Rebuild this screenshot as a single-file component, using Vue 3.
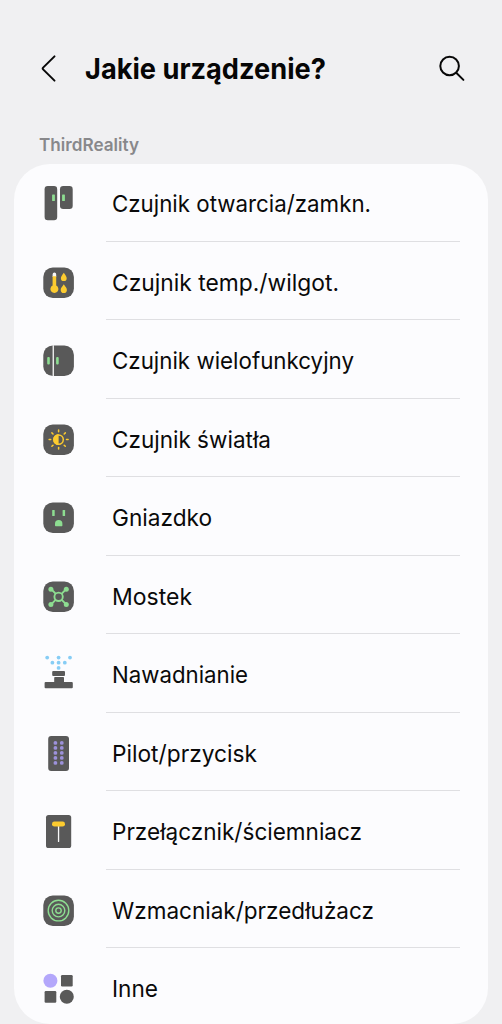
<script setup>
const rows = [
  { id: 'contact', label: 'Czujnik otwarcia/zamkn.', width: 259 },
  { id: 'climate', label: 'Czujnik temp./wilgot.', width: 227 },
  { id: 'multi', label: 'Czujnik wielofunkcyjny', width: 242 },
  { id: 'light', label: 'Czujnik światła', width: 159 },
  { id: 'outlet', label: 'Gniazdko', width: 100 },
  { id: 'bridge', label: 'Mostek', width: 80 },
  { id: 'water', label: 'Nawadnianie', width: 136 },
  { id: 'remote', label: 'Pilot/przycisk', width: 145 },
  { id: 'switch', label: 'Przełącznik/ściemniacz', width: 250 },
  { id: 'repeater', label: 'Wzmacniak/przedłużacz', width: 262 },
  { id: 'other', label: 'Inne', width: 46 },
]
const tiled = ['climate', 'multi', 'light', 'outlet', 'bridge', 'repeater']
const rays = [0, 45, 90, 135, 180, 225, 270, 315]
</script>

<template>
  <main class="screen">
    <header class="bar">
      <svg class="back" viewBox="0 0 24 32" aria-label="Wstecz">
        <path d="M18.5 3.4 7.1 14.6q-.9.9 0 1.8L18.5 27.6" />
      </svg>
      <h1>
        <svg class="title" width="242" height="46"><text x="0" y="33" textLength="241" lengthAdjust="spacingAndGlyphs">Jakie urządzenie?</text></svg>
      </h1>
      <svg class="search" viewBox="0 0 32 32" aria-label="Szukaj">
        <circle cx="13.6" cy="13" r="9.3" />
        <path d="m20.2 19.8 7.2 7.1" />
      </svg>
    </header>
    <h2>
      <svg class="group" width="102" height="24"><text x="0" y="18.5" textLength="100" lengthAdjust="spacingAndGlyphs">ThirdReality</text></svg>
    </h2>
    <ul class="card">
      <li v-for="row in rows" :key="row.id" class="row">
        <svg class="icon" viewBox="0 0 50 52">
          <rect v-if="tiled.includes(row.id)" x="9.3" y="10.4" width="30.6" height="30.6" rx="9.5" class="dark" />
          <g v-if="row.id === 'contact'">
            <rect class="dark" x="10.6" y="8" width="12.6" height="34.2" rx="3.2" />
            <rect class="dark" x="26" y="8" width="12.7" height="23" rx="3.2" />
            <rect class="green" x="18.1" y="16.5" width="2.8" height="6.5" rx=".6" />
            <rect class="green" x="28.1" y="16.5" width="2.8" height="6.5" rx=".6" />
          </g>
          <g v-else-if="row.id === 'climate'">
            <path class="white" d="M18.6 20v-2.6a1.8 1.8 0 0 1 3.6 0V20Z" />
            <path class="yellow" d="M18.6 19.2h3.6v9.3a4 4 0 1 1-3.6 0Z" />
            <path class="yellow" d="M29.8 15.8c1.5 2.3 2.9 3.7 2.9 5.4a2.9 2.9 0 0 1-5.8 0c0-1.7 1.4-3.1 2.9-5.4Z" />
            <path class="yellow" d="M29.8 27.3c1.6 2.4 3.1 3.8 3.1 5.7a3.1 3.1 0 0 1-6.2 0c0-1.9 1.5-3.3 3.1-5.7Z" />
          </g>
          <g v-else-if="row.id === 'multi'">
            <rect class="white" x="18.6" y="10.2" width="1.3" height="31.2" />
            <rect class="green" x="13.2" y="22" width="2.6" height="7.6" rx="1" />
            <rect class="green" x="22.1" y="22" width="2.6" height="7.6" rx="1" />
          </g>
          <g v-else-if="row.id === 'light'">
            <circle class="sun" cx="24.6" cy="25.6" r="4.7" />
            <path class="yellow" d="M24.6 20.1a5.5 5.5 0 0 0 0 11Z" />
            <path v-for="a in rays" :key="a" class="ray" d="M24.6 17.7v-1.6" :transform="`rotate(${a} 24.6 25.6)`" />
          </g>
          <g v-else-if="row.id === 'outlet'">
            <rect class="green" x="18.2" y="18" width="2.5" height="6" rx=".5" />
            <rect class="green" x="28.6" y="18" width="2.5" height="6" rx=".5" />
            <path class="green" d="M21 33.5v-1.8a3.7 3.7 0 0 1 7.4 0v1.8q0 .7-.7.7h-6q-.7 0-.7-.7Z" />
          </g>
          <g v-else-if="row.id === 'bridge'">
            <path class="link" d="m17.2 18.2 4.4 4.5m6.2 6.2 4.3 4.4m0-15.1-4.3 4.5m-6.2 6.2-4.4 4.4" />
            <circle class="link" cx="24.6" cy="25.8" r="4.2" />
            <circle class="green" cx="16.9" cy="18.2" r="2.5" />
            <circle class="green" cx="32.3" cy="18.2" r="2.5" />
            <circle class="green" cx="16.9" cy="33.4" r="2.5" />
            <circle class="green" cx="32.3" cy="33.4" r="2.5" />
          </g>
          <g v-else-if="row.id === 'water'">
            <g class="blue">
              <circle cx="13.2" cy="8.6" r="1.9" /><circle cx="24.6" cy="8.6" r="1.9" /><circle cx="36" cy="8.6" r="1.9" />
              <circle cx="18.4" cy="13.7" r="1.9" /><circle cx="24.6" cy="13.7" r="1.9" /><circle cx="30.8" cy="13.7" r="1.9" />
              <circle cx="24.6" cy="18.9" r="1.9" />
            </g>
            <rect class="dark" x="18.2" y="22" width="12.8" height="5" rx="1" />
            <path class="dark" d="M21 28h8.2q.8 0 .8.8V33h7.8q1 0 1 1v4.2q0 1-1 1H11.6q-1 0-1-1V34q0-1 1-1h8.6v-4.2q0-.8.8-.8Z" />
          </g>
          <g v-else-if="row.id === 'remote'">
            <rect class="dark" x="14.2" y="8" width="20.8" height="35" rx="3" />
            <template v-for="n in 5" :key="n">
              <circle class="violet" cx="21.4" :cy="9.9 + n * 5" r="1.9" />
              <circle class="violet" cx="27.8" :cy="9.9 + n * 5" r="1.9" />
            </template>
          </g>
          <g v-else-if="row.id === 'switch'">
            <rect class="dark" x="12" y="9" width="25.2" height="33" rx="2.6" />
            <rect class="white" x="23.9" y="20" width="1.3" height="16" rx=".6" />
            <rect class="yellow" x="18" y="15.6" width="13" height="5" rx="2.4" />
          </g>
          <g v-else-if="row.id === 'repeater'">
            <circle class="ring" cx="24.5" cy="25.6" r="10.3" />
            <circle class="ring" cx="24.5" cy="25.6" r="6.3" />
            <circle class="ring" cx="24.5" cy="25.6" r="2.7" />
          </g>
          <g v-else>
            <circle class="lilac" cx="16.4" cy="17.8" r="7" />
            <rect class="dark" x="27" y="12" width="11.7" height="11.5" rx="1.2" />
            <rect class="dark" x="10.6" y="28" width="11.7" height="11.8" rx="1.2" />
            <circle class="dark" cx="32.8" cy="33.8" r="7" />
          </g>
        </svg>
        <div class="cell">
          <svg class="label" height="40" width="340">
            <text x="0" y="28" :textLength="row.width" lengthAdjust="spacingAndGlyphs">{{ row.label }}</text>
          </svg>
        </div>
      </li>
    </ul>
  </main>
</template>

<style scoped>
.screen { box-sizing: border-box; width: 502px; height: 1024px; background: #f0f0f2; overflow: hidden; padding: 46px 14px 0; font-family: Inter, "Open Sans", sans-serif; color: #060606; }
.bar { display: flex; align-items: center; height: 46px; padding-left: 22px; }
.back { width: 24px; height: 32px; flex: none; }
.search { width: 32px; height: 32px; margin-left: auto; margin-right: 20px; }
.back, .search { fill: none; stroke: #080808; stroke-width: 2; stroke-linecap: round; }
h1 { margin: 0 0 0 25px; height: 46px; font-size: 28.5px; font-weight: 700; }
h2 { margin: 40px 0 0 25px; height: 31.5px; font-size: 17.5px; font-weight: 600; }
.title, .group { display: block; overflow: visible; }
.title { fill: #060606; }
.group { fill: #88888b; }
.card { box-sizing: border-box; list-style: none; margin: 0; padding: 0; height: 860.5px; border-radius: 36px; background: #fcfcfe; overflow: hidden; }
.row { display: flex; height: 78.55px; padding: 0 28px 0 20px; }
.icon { width: 50px; height: 52px; flex: none; margin-top: 14.5px; }
.cell { box-sizing: border-box; flex: 1; height: 78px; margin-left: 22px; padding: 20.5px 0 0 6px; border-bottom: 1px solid #dfdfe2; }
.row:last-child .cell { border-color: transparent; }
.label { display: block; overflow: visible; }
.label text { font-size: 23.5px; fill: #0a0a0a; }
.dark { fill: #595959; }
.green { fill: #8ddd91; }
.yellow { fill: #fccb2f; }
.white { fill: #f8f8f8; }
.blue { fill: #86cdf5; }
.violet { fill: #9c91da; }
.lilac { fill: #b3a7fb; }
.sun, .ray { fill: none; stroke: #fccb2f; stroke-width: 1.5; stroke-linecap: round; }
.link { fill: none; stroke: #8ddd91; stroke-width: 1.9; }
.ring { fill: none; stroke: #8ddd91; stroke-width: 1.4; }
</style>

<style>
body { background: #f0f0f2; }
</style>
